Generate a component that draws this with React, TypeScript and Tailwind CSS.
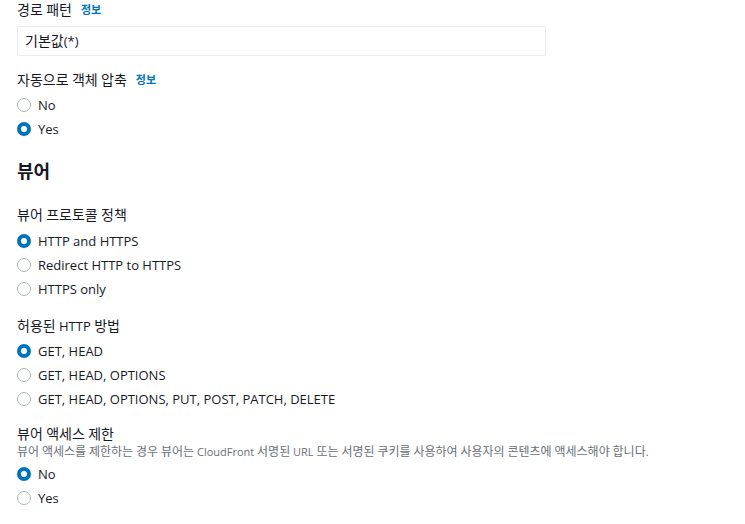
import React from 'react';

const FONT = '"Open Sans", "Noto Sans CJK KR", sans-serif';

// Hangul runs render a touch larger than the Latin runs, as in the console
function Mixed({ text, ko }: { text: string; ko: string }) {
  const parts = text.split(/([\u3131-\uD79D]+)/);
  return (
    <>
      {parts.map((p, i) =>
        /[\u3131-\uD79D]/.test(p) ? (
          <span key={i} className={ko}>
            {p}
          </span>
        ) : (
          <React.Fragment key={i}>{p}</React.Fragment>
        )
      )}
    </>
  );
}

function Radio({ label, checked }: { label: string; checked?: boolean }) {
  return (
    <div className="flex h-[24px] items-center">
      <span
        className={
          checked
            ? 'box-border h-[14px] w-[14px] shrink-0 rounded-full border-[4px] border-[#0073bb] bg-white'
            : 'box-border h-[14px] w-[14px] shrink-0 rounded-full border-[1.5px] border-[#aab7b8] bg-white'
        }
      />
      <span className="ml-[7px] text-[13px] leading-[20px] text-[#16191f]">{label}</span>
    </div>
  );
}

function Label({ text, info, className = '' }: { text: string; info?: boolean; className?: string }) {
  return (
    <div className={`flex h-[20px] items-center text-[13px] leading-[20px] text-[#16191f] ${className}`}>
      <span>
        <Mixed text={text} ko="text-[14px]" />
      </span>
      {info && <span className="ml-[9px] text-[11px] font-bold text-[#0073bb]">정보</span>}
    </div>
  );
}

export default function App() {
  return (
    <div className="min-h-screen bg-white px-[17px]" style={{ fontFamily: FONT }}>
      <Label text="경로 패턴" info />
      <div className="mt-[6px] flex h-[30px] w-[529px] items-center rounded-[2px] border border-[#eaeded] bg-white px-[7px] text-[13px] text-[#16191f]">
        <span>
          <Mixed text="기본값(*)" ko="text-[14px]" />
        </span>
      </div>

      <Label text="자동으로 객체 압축" info className="mt-[14px]" />
      <div className="mt-[3px]">
        <Radio label="No" />
        <Radio label="Yes" checked />
      </div>

      <h2 className="mt-[18px] text-[18px] font-bold leading-[24px] text-[#16191f]">뷰어</h2>

      <Label text="뷰어 프로토콜 정책" className="mt-[22px]" />
      <div className="mt-[4px]">
        <Radio label="HTTP and HTTPS" checked />
        <Radio label="Redirect HTTP to HTTPS" />
        <Radio label="HTTPS only" />
      </div>

      <Label text="허용된 HTTP 방법" className="mt-[15px]" />
      <div className="mt-[3px]">
        <Radio label="GET, HEAD" checked />
        <Radio label="GET, HEAD, OPTIONS" />
        <Radio label="GET, HEAD, OPTIONS, PUT, POST, PATCH, DELETE" />
      </div>

      <Label text="뷰어 액세스 제한" className="mt-[13px]" />
      <div className="text-[11px] leading-[16px] text-[#687078]">
        <Mixed
          text="뷰어 액세스를 제한하는 경우 뷰어는 CloudFront 서명된 URL 또는 서명된 쿠키를 사용하여 사용자의 콘텐츠에 액세스해야 합니다."
          ko="text-[12px]"
        />
      </div>
      <div className="mt-[2px]">
        <Radio label="No" checked />
        <Radio label="Yes" />
      </div>
    </div>
  );
}
